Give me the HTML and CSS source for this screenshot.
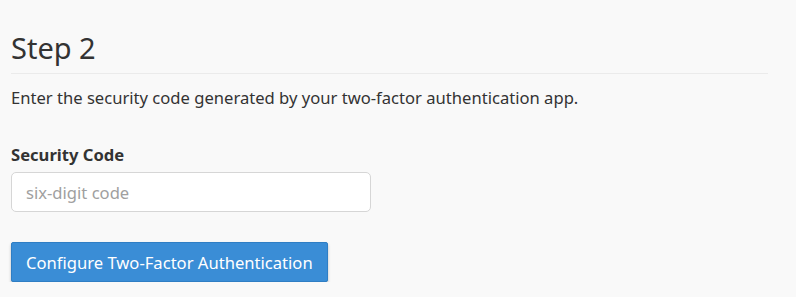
FILE: index.html
```html
<!DOCTYPE html>
<html>
<head>
<meta charset="utf-8">
<link rel="stylesheet" href="styles.css">
</head>
<body>
<div class="page">
  <h1 class="step-title">Step 2</h1>
  <p class="intro">Enter the security code generated by your two-factor authentication app.</p>
  <div class="field">
    <label class="field-label" for="code">Security Code</label>
    <input class="field-input" id="code" type="text" placeholder="six-digit code">
  </div>
  <button class="btn-primary" type="button">Configure Two-Factor Authentication</button>
</div>
</body>
</html>
```
FILE: styles.css
```css
html, body {
  margin: 0;
  padding: 0;
  background: #f9f9f9;
}
body {
  font-family: "Noto Sans", "Open Sans", "Liberation Sans", sans-serif;
  color: #333;
  font-size: 16.6px;
  line-height: 24px;
}
.page {
  width: 757px;
  padding: 32px 0 0 11px;
}
.step-title {
  margin: 0;
  font-size: 29px;
  font-weight: 400;
  line-height: 32px;
  color: #333;
  padding-bottom: 9px;
  border-bottom: 1px solid #ebebeb;
}
.intro {
  margin: 12px 0 0;
}
.field {
  margin-top: 33px;
  display: flex;
  flex-direction: column;
}
.field-label {
  font-weight: 700;
  margin-bottom: 5px;
}
.field-input {
  width: 360px;
  height: 40px;
  box-sizing: border-box;
  border: 1px solid #d6d6d6;
  border-radius: 5px;
  background: #fff;
  padding: 0 14px;
  font-family: inherit;
  font-size: 16.6px;
  color: #555;
}
.field-input::placeholder {
  color: #a0a0a0;
}
.btn-primary {
  margin-top: 30px;
  height: 40px;
  box-sizing: border-box;
  padding: 0 14px;
  border: 1px solid #2f7ec4;
  border-radius: 2px;
  background: #3a8dd6;
  color: #fff;
  font-family: inherit;
  font-size: 16.6px;
  box-shadow: 0 2px 3px rgba(0,0,0,0.25);
}
```
